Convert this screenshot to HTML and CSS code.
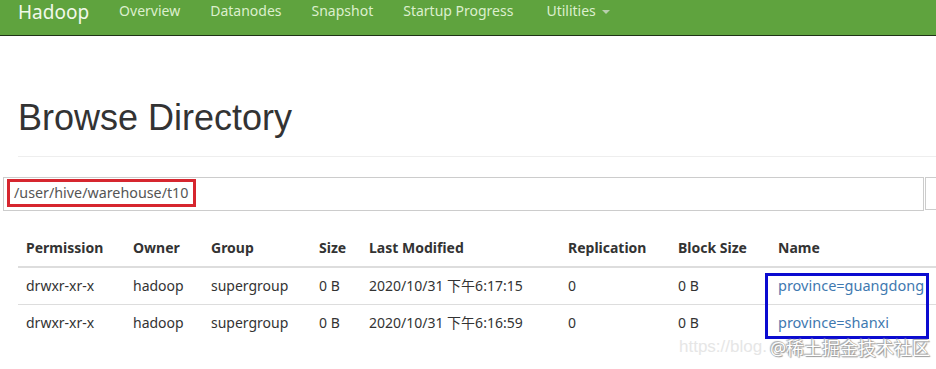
FILE: index.html
```html
<!DOCTYPE html>
<html lang="en">
<head>
    <meta charset="UTF-8" />
    <meta name="viewport" content="width=device-width, initial-scale=1.0" />
    <title>Browsing HDFS</title>
    <link rel="stylesheet" href="styles.css">
</head>
<body>
    <header class="navbar">
        <span class="brand">Hadoop</span>
        <nav class="nav-links">
            <a href="#">Overview</a>
            <a href="#">Datanodes</a>
            <a href="#">Snapshot</a>
            <a href="#">Startup Progress</a>
            <a href="#" class="dropdown">Utilities <span class="caret"></span></a>
        </nav>
    </header>

    <main class="container">
        <div class="page-header">
            <h1>Browse Directory</h1>
        </div>

        <div class="path-row">
            <div class="path-input">
                <span class="path-text">/user/hive/warehouse/t10</span>
            </div>
            <div class="path-btn"></div>
        </div>

        <div class="table-wrap">
            <table class="listing">
                <colgroup>
                    <col class="c-perm">
                    <col class="c-owner">
                    <col class="c-group">
                    <col class="c-size">
                    <col class="c-mod">
                    <col class="c-repl">
                    <col class="c-block">
                    <col>
                </colgroup>
                <thead>
                    <tr>
                        <th>Permission</th>
                        <th>Owner</th>
                        <th>Group</th>
                        <th>Size</th>
                        <th>Last Modified</th>
                        <th>Replication</th>
                        <th>Block Size</th>
                        <th>Name</th>
                    </tr>
                </thead>
                <tbody>
                    <tr>
                        <td>drwxr-xr-x</td>
                        <td>hadoop</td>
                        <td>supergroup</td>
                        <td>0 B</td>
                        <td>2020/10/31 下午6:17:15</td>
                        <td>0</td>
                        <td>0 B</td>
                        <td><a href="#">province=guangdong</a></td>
                    </tr>
                    <tr>
                        <td>drwxr-xr-x</td>
                        <td>hadoop</td>
                        <td>supergroup</td>
                        <td>0 B</td>
                        <td>2020/10/31 下午6:16:59</td>
                        <td>0</td>
                        <td>0 B</td>
                        <td><a href="#">province=shanxi</a></td>
                    </tr>
                </tbody>
            </table>
            <!-- annotation drawn over the name column -->
            <div class="mark-blue"></div>
        </div>
    </main>

    <div class="watermark">
        <span class="wm-url">https://blog.</span>
        <span class="wm-brand">@稀土掘金技术社区</span>
    </div>
</body>
</html>
```

FILE: styles.css
```css
:root {
  --nav-green: #5fa33e;
  --nav-text: #dcefcd;
  --text-dark: #333;
  --border-light: #ddd;
  --link-color: #3f79b0;
}

body {
  margin: 0;
  font-family: 'Noto Sans', 'Noto Sans CJK SC', sans-serif;
  font-size: 14px;
  color: var(--text-dark);
  background: #fff;
  overflow: hidden;
  position: relative;
  min-height: 369px;
}

/* Top bar */
.navbar {
  height: 35px;
  background-color: var(--nav-green);
  border-bottom: 1px solid #1f3316;
  display: flex;
  align-items: flex-start;
  padding-left: 18px;
}

.brand {
  font-size: 19px;
  line-height: 22px;
  padding-top: 1px;
  color: #f1f8ea;
}

.nav-links {
  display: flex;
  margin-left: 15px;
}

.nav-links a {
  color: var(--nav-text);
  text-decoration: none;
  font-size: 14px;
  line-height: 22px;
  padding: 0 15px;
}

.nav-links a:nth-child(4) {
  padding-right: 18px;
}

.caret {
  display: inline-block;
  width: 0;
  height: 0;
  margin-left: 3px;
  vertical-align: middle;
  border-top: 4px solid #b9cfae;
  border-left: 4px solid transparent;
  border-right: 4px solid transparent;
}

/* Page body */
.container {
  width: 1140px;
  padding: 0 18px;
}

.page-header {
  margin: 62px 0 20px;
  padding-bottom: 18px;
  border-bottom: 1px solid #eee;
}

.page-header h1 {
  margin: 0;
  font-family: 'Liberation Sans', Arial, sans-serif;
  font-size: 36px;
  font-weight: 400;
  line-height: 1.1;
  color: var(--text-dark);
}

.path-row {
  display: flex;
  margin-left: -15px;
}

.path-input {
  width: 916px;
  height: 31px;
  border: 1px solid #ccc;
  padding: 1px 0 0 3px;
  box-sizing: content-box;
}

.path-btn {
  width: 60px;
  height: 31px;
  border: 1px solid #ccc;
  margin-left: 1px;
}

.path-text {
  display: inline-block;
  border: 3px solid #d6262f;
  padding: 0 5px 0 4px;
  line-height: 22px;
  font-size: 14.3px;
  color: #555;
}

/* File listing */
.table-wrap {
  position: relative;
  margin-top: 19px;
}

.listing {
  width: 1100px;
  border-collapse: collapse;
  table-layout: fixed;
}

.c-perm { width: 107px; }
.c-owner { width: 78px; }
.c-group { width: 108px; }
.c-size { width: 50px; }
.c-mod { width: 199px; }
.c-repl { width: 110px; }
.c-block { width: 100px; }

.listing th,
.listing td {
  padding: 8px;
  line-height: 20px;
  text-align: left;
  white-space: nowrap;
}

.listing th {
  font-weight: 700;
  border-bottom: 2px solid var(--border-light);
}

.listing td {
  border-top: 1px solid var(--border-light);
}

.listing td a {
  color: var(--link-color);
  text-decoration: none;
  font-size: 14.5px;
  line-height: 18px;
}

.mark-blue {
  position: absolute;
  left: 747px;
  top: 43px;
  width: 158px;
  height: 60px;
  border: 3px solid #0b0bd0;
}

/* Site watermark */
.watermark {
  position: absolute;
  left: 679px;
  top: 334px;
  display: flex;
  align-items: center;
  gap: 3px;
  white-space: nowrap;
}

.wm-url {
  font-family: 'Liberation Sans', Arial, sans-serif;
  font-size: 17px;
  color: #e6e6e6;
}

.wm-brand {
  font-size: 18px;
  color: #fff;
  text-shadow: 0 0 1px #888, 1px 1px 1px #999, -1px -1px 1px #aaa;
}
```
